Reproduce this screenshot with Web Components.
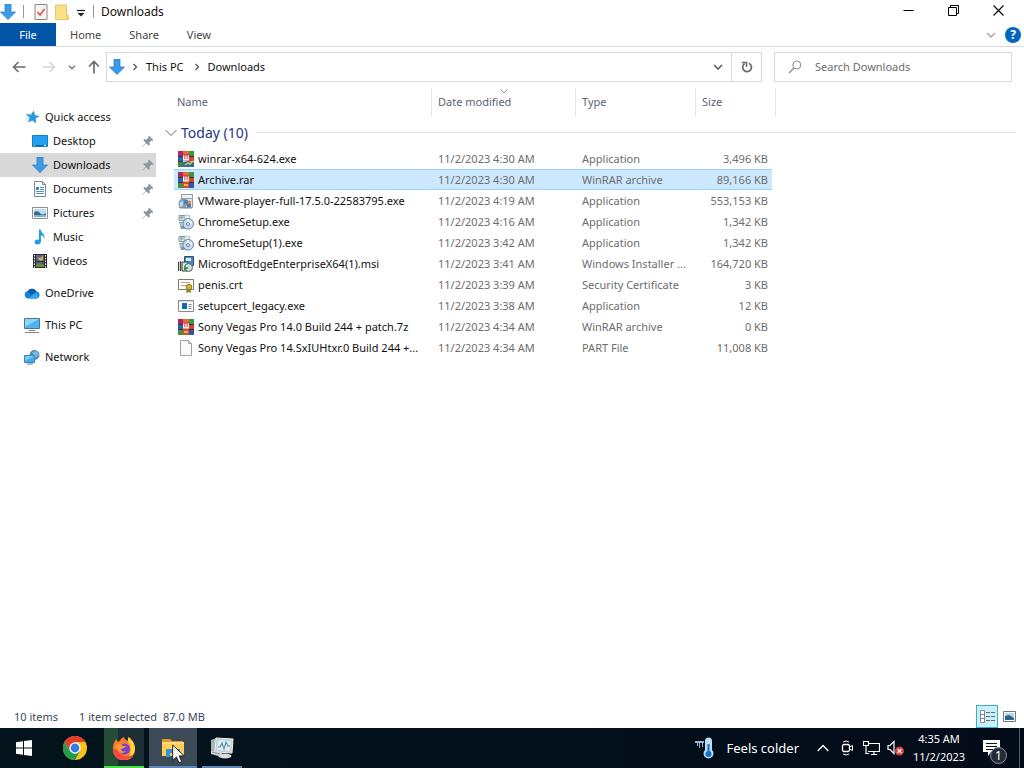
<!DOCTYPE html>
<html lang="en">
<head>
<meta charset="utf-8">
<title>Downloads</title>
<style>
  html, body {
    height: 100%;
    margin: 0;
  }

  body {
    background: #fff;
    color: #111;
    font: 11px/16px "Noto Sans", "Open Sans", sans-serif;
    overflow: hidden;
  }
</style>
</head>
<body>
<file-explorer></file-explorer>

<script>
// Icon artwork, keyed by name: [viewBox width, viewBox height, markup]
const ICONS = {
  download: [16, 16, '<path d="M5 0h6v8h4.500L8 15.600.5 8H5z" fill="#3d9ae6" stroke="#2b80c8" stroke-width=".8"/>'],
  properties: [14, 16, '<path d="M1 .5h12v15H1z" fill="#f7f5f4" stroke="#8b8583"/><path d="M3.500 8l2.500 3 4.500-6" fill="none" stroke="#d8553f" stroke-width="1.600"/>'],
  folder: [14, 16, '<path d="M.5 1h11v13l2-1v2.500H.5z" fill="#fbe08a" stroke="#e5c565"/><path d="M11 10h2.500v5.500H11z" fill="#f2d069"/>'],
  qatMenu: [10, 10, '<path d="M1 3.500h8" stroke="#222" stroke-width="1.300"/><path d="M1.500 6h7L5 9.500z" fill="#222"/>'],
  minimize: [11, 11, '<path d="M.5 5.500h10" stroke="#000"/>'],
  restore: [11, 11, '<path d="M.5 2.500h8v8h-8zM2.500 2.500v-2h8v8h-2" fill="none" stroke="#000"/>'],
  close: [11, 11, '<path d="M.5.5l10 10M10.500.5l-10 10" stroke="#000" stroke-width="1.100"/>'],
  back: [14, 12, '<path d="M13.500 6H1.500M6.500 1L1.500 6l5 5" fill="none" stroke="#6b6b6b" stroke-width="1.600"/>'],
  forward: [14, 12, '<path d="M.5 6h12M7.500 1l5 5-5 5" fill="none" stroke="#d5d5d5" stroke-width="1.500"/>'],
  up: [12, 14, '<path d="M6 13.500v-12M1 6.500l5-5 5 5" fill="none" stroke="#6b6b6b" stroke-width="1.700"/>'],
  recent: [8, 5, '<path d="M1 .7l3 3 3-3" fill="none" stroke="currentColor" stroke-width="1.400"/>'],
  down: [10, 6, '<path d="M1 1l4 4 4-4" fill="none" stroke="currentColor" stroke-width="1.500"/>'],
  sort: [8, 5, '<path d="M.5.5L4 4 7.500.5" fill="none" stroke="#888" stroke-width=".9"/>'],
  expand: [12, 8, '<path d="M.5 1L6 6.500 11.500 1" fill="none" stroke="#666"/>'],
  crumb: [6, 8, '<path d="M1.500 1l3 3-3 3" fill="none" stroke="#555" stroke-width="1.300"/>'],
  refresh: [12, 12, '<path d="M8 2.200a4.400 4.400 0 1 1-4.500.4" fill="none" stroke="#686868" stroke-width="1.700"/><path d="M1 1.500h4.500V6" fill="none" stroke="#686868" stroke-width="1.500"/>'],
  search: [14, 14, '<circle cx="8.800" cy="5" r="4" fill="none" stroke="#8a8a8a"/><path d="M6 8L1 13" stroke="#8a8a8a" stroke-width="1.200"/>'],
  star: [16, 16, '<path d="M9 1.500l1.700 4.300 4.800.1-3.700 3 1.200 5-4.200-2.500-4 2.600.8-4.700L1.500 6l4.900-.2z" transform="rotate(8 8 8)" fill="#2a98e0"/><path d="M2 8h4M1.500 11h4M4 5h4" stroke="#a7d7f5" stroke-width=".8"/>'],
  desktop: [16, 16, '<path d="M.5 2.500h15v11H.5z" fill="#22a0f3" stroke="#1380cc"/><path d="M1 12.500h14" stroke="#0b67ad"/><path d="M2 12.500h1M12 12.500h2" stroke="#fff"/>'],
  document: [16, 16, '<path d="M2.500.5h8l3 3v12h-11z" fill="#fff" stroke="#78889a"/><path d="M10.500.5v3h3" fill="none" stroke="#78889a"/><path d="M4 6.500h3M8 6.500h4M4 8.500h3M8 8.500h4M4 10.500h8M4 12.500h8" stroke="#4a97bb"/><path d="M4 6h3v3H4z" fill="#3a8ab7"/>'],
  picture: [16, 16, '<path d="M.5 2.500h15v11H.5z" fill="#fff" stroke="#899096"/><path d="M2 4h12v8H2z" fill="#bbdcf1"/><path d="M2 7q4-2 6 1t6 0v4H2z" fill="#376b8e"/><path d="M2 10h12v2H2z" fill="#7bb2d0"/>'],
  music: [16, 16, '<path d="M7 .5h1.700c.3 3.500 4.600 4.300 3.800 9-.6-2.200-2-3-3.600-3.300v6.300c0 1.800-1.500 3-3.400 3S2.600 14.600 2.600 13c0-1.800 2.200-3 4.400-2.300z" fill="#1d9ae8"/>'],
  video: [16, 16, '<path d="M1 1h14v14H1z" fill="#2d2d31"/><path d="M4 2h8v6H4z" fill="#52639c"/><path d="M4 9h8v5H4z" fill="#4c5f87"/><path d="M5 4l3 1 3-2v4l-3 1z" fill="#d6ac36"/><path d="M4 12l3-2 5 2v2H4z" fill="#70893a"/><path d="M2.500 2v13M13.500 2v13" stroke="#fff" stroke-dasharray="1.500 1.300"/>'],
  cloud: [16, 16, '<path d="M4 13.500a3.800 3.800 0 0 1-.2-7.500A5 5 0 0 1 12.500 6.500 3.600 3.600 0 0 1 13 13.500z" fill="#1583d6"/><path d="M3.800 6a5 5 0 0 1 8.700.5L6.500 10z" fill="#0a5ba8"/><path d="M4 13.500l8-5.500a3.600 3.600 0 0 1 1 5.500z" fill="#32a9ed"/>'],
  computer: [16, 16, '<path d="M.5 1.500h15v10H.5z" fill="#4eb4ef" stroke="#50758b"/><path d="M1 2h14L1 10z" fill="#8bd4fa"/><path d="M5 13.500h6M1 15.500h14" stroke="#7c8a95"/>'],
  network: [16, 16, '<circle cx="10.500" cy="6" r="5" fill="#4b8fb7"/><path d="M8 3l5-1 2 4-4 3z" fill="#79b8da"/><path d="M.5 6.500h10v7H.5z" fill="#43aeee" stroke="#4382a7"/><path d="M1 7h9L1 12z" fill="#7accfa"/><path d="M3 15h6" stroke="#577a91"/>'],
  pin: [12, 12, '<path d="M7 .5L11.500 5l-1 .8-1-.2-2 2 .2 2.400-1 .8L4 8.200.8 11.600l-.4-.4L3.700 7.800 1.300 5.300l.8-1 2.300.3 2.200-2-.3-1.200z" fill="#8a959c"/>'],
  winrar: [16, 16, '<path d="M0 0h5v5H0z" fill="#a8286c"/><path d="M5 0h6v5H5z" fill="#f0682c"/><path d="M11 0h5v5h-5z" fill="#2f9b43"/><path d="M0 6h5v4H0z" fill="#2465b8"/><path d="M11 6h5v4h-5z" fill="#e0402c"/><path d="M0 11h5v5H0z" fill="#3f9043"/><path d="M11 11h5v5h-5z" fill="#2b58a8"/><path d="M0 5.500h16M0 10.500h16" stroke="#4c2a34"/><path d="M5 3h6v13H5z" fill="#d8492f"/><path d="M5 4h6v6H5z" fill="#c74c3e"/><path d="M5.700 4.500v4.300h4.600V4.500M8 4.500V9" fill="none" stroke="#fff" stroke-width="1.200"/><path d="M6 12h4v2H6z" fill="#e9b84a"/>'],
  winrarSetup: [16, 16, '<path d="M0 0h5v5H0z" fill="#a8286c"/><path d="M5 0h6v5H5z" fill="#f0682c"/><path d="M11 0h5v5h-5z" fill="#2f9b43"/><path d="M0 6h5v4H0z" fill="#2465b8"/><path d="M11 6h5v4h-5z" fill="#e0402c"/><path d="M0 11h6v5H0z" fill="#3f8a43"/><path d="M5 3h6v7H5z" fill="#c74c3e"/><path d="M0 5.500h5M11 5.500h5M0 10.500h5" stroke="#4c2a34"/><path d="M5.700 4.500v4.300h4.600V4.500M8 4.500V9" fill="none" stroke="#fff" stroke-width="1.200"/><path d="M5 11l5-1 6 1v5H4z" fill="#2f6c9d"/><path d="M7 14l3-2 2 1 3-3" fill="none" stroke="#e8c34b" stroke-width="1.500"/>'],
  vmware: [16, 16, '<path d="M3.500 1.500h11v4h-11z" fill="#eef2f4" stroke="#929da4"/><path d="M3.500 5.500h11v9h-11z" fill="#dde5ea" stroke="#929da4"/><path d="M.5 9l3-4 5 1 1 6-3 3H1z" fill="#7d9eb5"/><path d="M2 9l3-1v5l-3 1z" fill="#c2dae8"/><path d="M6 7h4v4H6z" fill="#4b83b5"/><path d="M10 8h3v3h-3z" fill="#d9873b"/><path d="M9 11h4v3H9z" fill="#5277a0"/><path d="M2 15h12" stroke="#7b8891"/>'],
  setup: [16, 16, '<path d="M1 1.500h6v5H1z" fill="#d3e3e7" stroke="#8597a6"/><path d="M2 2.500h4l-3 3z" fill="#74ad86"/><path d="M7 .8l5 1-1 4-5-1z" fill="#e9f0f5" stroke="#91a0ad" stroke-width=".6"/><path d="M1 8h5l1 7H3z" fill="#8098ae"/><path d="M2 9h3v3H3z" fill="#c1d3df"/><circle cx="10.200" cy="9.800" r="5.300" fill="#c9dced" stroke="#5d83ae"/><path d="M10 5v5l4-2" fill="none" stroke="#fff" stroke-width="1.700"/><circle cx="10" cy="10" r="1.500" fill="#fff" stroke="#577ca4"/>'],
  msi: [16, 16, '<path d="M6.500.5h9v9h-9z" fill="#3b8ed0" stroke="#394e61"/><path d="M8 2h5v3H8z" fill="#d5effb"/><path d="M4 6h6v9H4z" fill="#dfe5df" stroke="#38413c"/><path d="M.5 6v9M2.500 5v10" stroke="#38413c" stroke-width="1.200"/><circle cx="10.500" cy="11.500" r="4" fill="#d8dfdf" stroke="#57616a"/><path d="M6 10l5 2-5 3z" fill="#279f4c"/>'],
  certificate: [16, 16, '<path d="M.5 2.500h15v10H.5z" fill="#fffdf4" stroke="#7e7b70"/><path d="M3 5.500h9M3 8.500h5" stroke="#aaa79c"/><path d="M9 11l-1 5 3-1 2 1-.5-5z" fill="#8c8528"/><circle cx="11" cy="10" r="2.800" fill="#d2b330" stroke="#918025"/>'],
  program: [16, 16, '<path d="M.5 2.500h15v11H.5z" fill="#fff" stroke="#858b90"/><path d="M1 3h14v1H1z" fill="#d7dde1"/><path d="M4 5h5v6H4z" fill="#126aac"/><path d="M10.500 6.500h3M10.500 8.500h3M10.500 10.500h3" stroke="#7d8d98"/>'],
  blank: [16, 16, '<path d="M2.500.5h8l3 3v12h-11z" fill="#fafafa" stroke="#a1a1a1"/><path d="M10.500.5v3h3" fill="none" stroke="#a1a1a1"/>'],
  details: [16, 13, '<path d="M1.500.5h4v12h-4zM1.500 4.500h4M1.500 8.500h4" fill="#fff" stroke="#8b8390"/><path d="M7 2.500h4M12 2.500h4M7 6.500h4M12 6.500h4M7 10.500h4M12 10.500h4" stroke="#646b70"/>'],
  thumb: [13, 11, '<path d="M.5.500h12v10H.5z" fill="#fff" stroke="#777"/><path d="M2 2h9v7H2z" fill="#b7d8eb"/><path d="M2 5l4-1 5 3v2H2z" fill="#2c658e"/>'],
  windows: [16, 16, '<path d="M0 2.300l7-1v6.200H0zM8 1.100L16 0v7.500H8zM0 8.500h7v6.200l-7-1zM8 8.500h8V16l-8-1.100z" fill="#fff"/>'],
  chrome: [24, 24, '<circle cx="12" cy="12" r="12" fill="#fbc116"/><path d="M12 6h10.400a12 12 0 0 0-20.800 0L7 15z" fill="#e33b2e"/><path d="M1.600 6a12 12 0 0 0 10.400 18l5-9-5 3-5.500-3.500z" fill="#229d4c"/><circle cx="12" cy="12" r="5.700" fill="#fff"/><circle cx="12" cy="12" r="4.400" fill="#327ce6"/>'],
  firefox: [24, 24, '<path d="M2 7l2-4 2 3c2-1 3-4 6-5 0 2 2 3 4 4l1-4c4 3 6 7 6 12a11 11 0 0 1-22 1c0-3 0-5 1-7z" fill="#ff7926"/><path d="M16 1c4 3 7 7 7 12 0 4-3 8-7 10 3-6 4-12 0-17z" fill="#ffd23d"/><path d="M1 13c0 14 17 13 21 5-5 4-15 3-16-5z" fill="#f54a43"/><circle cx="12.500" cy="13" r="5.500" fill="#7743cf"/><path d="M4 8c3-1 5 0 7 2h3c-1 2-3 2-5 3 0 2 2 3 5 2-3 4-10 2-10-7z" fill="#ff9d30"/>'],
  explorer: [24, 22, '<path d="M1 2h8l2 2h11v15H1z" fill="#dc9c24"/><path d="M1 5h22v14H1z" fill="#ffcf55"/><path d="M5 12h14v8h-4v-4H9v4H5z" fill="#3194d7"/><path d="M1 5h22v2H1z" fill="#ffdc78"/>'],
  monitor: [24, 24, '<path d="M1 4l6-2v14l-6-2z" fill="#aab5b8"/><path d="M6 2l17 1-1 14-17-1z" fill="#c4cdd0" stroke="#eef2f3"/><path d="M8 4l13 1-1 10-13-1z" fill="#dfecee"/><path d="M8 11h2l2-4 2 6 2-7 2 4h2" fill="none" stroke="#5590a8" stroke-width="1.100"/><path d="M1 14l11 3v4L1 18z" fill="#cfd5d5"/><ellipse cx="15" cy="20" rx="6.500" ry="2.500" fill="#d8dddd"/><path d="M2 16l8 2" stroke="#8b9494"/>'],
  cursor: [13, 20, '<path d="M.7 1v15.500l3.700-3.600 2.700 6 2.700-1.200-2.600-5.800h5z" fill="#fff" stroke="#111" stroke-width=".9"/>'],
  weather: [20, 22, '<path d="M0 4h9v2H8v4H7V6H5v5H4V6H3v3H2V6H0z" fill="#8fb9d6"/><path d="M10 4a3.500 3.500 0 0 1 7 0v9a5 5 0 1 1-7 0z" fill="#b9def6"/><path d="M13.500 7v10" stroke="#116ac4" stroke-width="2"/><circle cx="13.500" cy="17" r="3" fill="#126ed0"/>'],
  chevronUp: [12, 8, '<path d="M.7 7L6 1.500 11.300 7" fill="none" stroke="#fff" stroke-width="1.300"/>'],
  camera: [12, 16, '<rect x="1.500" y="4.500" width="7" height="7" rx="1.500" fill="none" stroke="#fff" stroke-width="1.300"/><path d="M8.500 7l3-1.500v5l-3-1.500M2 2q3-2 6 0M2 14q3 2 6 0" fill="none" stroke="#fff"/>'],
  ethernet: [17, 16, '<path d="M5 3.500h11.500v8H5M8 14.500h6M11 12v2.500M.5 1.500h5v4h-5zM3 5.500v8h3" fill="none" stroke="#fff" stroke-width="1.200"/>'],
  muted: [18, 16, '<path d="M1 5.500h2l4-4v12l-4-4H1z" fill="none" stroke="#fff" stroke-width="1.200"/><circle cx="12.500" cy="11" r="4.500" fill="#d83b3b"/><path d="M10.500 9l4 4M14.500 9l-4 4" stroke="#fff" stroke-width="1.300"/>'],
  message: [17, 16, '<path d="M0 0h17v12H8l-3 4v-4H0z" fill="#fff"/><path d="M3 3.500h11M3 6.500h11M3 9.500h7" stroke="#071421"/>']
};

const FILES = [
  ['winrarSetup', 'winrar-x64-624.exe', '11/2/2023 4:30 AM', 'Application', '3,496 KB'],
  ['winrar', 'Archive.rar', '11/2/2023 4:30 AM', 'WinRAR archive', '89,166 KB'],
  ['vmware', 'VMware-player-full-17.5.0-22583795.exe', '11/2/2023 4:19 AM', 'Application', '553,153 KB'],
  ['setup', 'ChromeSetup.exe', '11/2/2023 4:16 AM', 'Application', '1,342 KB'],
  ['setup', 'ChromeSetup(1).exe', '11/2/2023 3:42 AM', 'Application', '1,342 KB'],
  ['msi', 'MicrosoftEdgeEnterpriseX64(1).msi', '11/2/2023 3:41 AM', 'Windows Installer ...', '164,720 KB'],
  ['certificate', 'penis.crt', '11/2/2023 3:39 AM', 'Security Certificate', '3 KB'],
  ['program', 'setupcert_legacy.exe', '11/2/2023 3:38 AM', 'Application', '12 KB'],
  ['winrar', 'Sony Vegas Pro 14.0 Build 244 + patch.7z', '11/2/2023 4:34 AM', 'WinRAR archive', '0 KB'],
  ['blank', 'Sony Vegas Pro 14.SxIUHtxr.0 Build 244 +...', '11/2/2023 4:34 AM', 'PART File', '11,008 KB']
];

// Reset shared by every element that holds controls
const CONTROLS = `
  * { box-sizing: border-box; }
  button, input {
    margin: 0;
    padding: 0;
    border: 0;
    background: none;
    color: inherit;
    font: inherit;
    outline: 0;
  }
  button {
    display: flex;
    align-items: center;
    justify-content: center;
  }
  a { color: inherit; text-decoration: none; }
`;

class BaseElement extends HTMLElement {
  constructor() {
    super();
    this.attachShadow({ mode: 'open' });
  }

  connectedCallback() {
    this.shadowRoot.innerHTML = `<style>${CONTROLS}${this.styles()}</style>${this.markup()}`;
  }
}

class AppIcon extends BaseElement {
  styles() {
    return ':host { display: inline-flex; flex: none; } svg { display: block; }';
  }

  markup() {
    const [width, height, body] = ICONS[this.getAttribute('name')];
    return `<svg width="${width}" height="${height}" viewBox="0 0 ${width} ${height}" aria-hidden="true">${body}</svg>`;
  }
}

class TitleBar extends BaseElement {
  styles() {
    return `
      :host { display: flex; height: 23px; align-items: center; }
      .quick { display: flex; align-items: center; gap: 7px; }
      .line { width: 1px; height: 13px; background: #999; }
      .first { margin-right: 3px; }
      .title { margin-left: 7px; font-size: 12px; }
      .window { display: flex; margin-left: auto; padding-right: 3px; }
      .window button { width: 45px; height: 20px; margin-bottom: 2px; }
    `;
  }

  markup() {
    return `
      <div class="quick">
        <app-icon name="download"></app-icon>
        <span class="line first"></span>
        <button aria-label="Properties"><app-icon name="properties"></app-icon></button>
        <button aria-label="New folder"><app-icon name="folder"></app-icon></button>
        <button aria-label="Customize toolbar"><app-icon name="qatMenu"></app-icon></button>
        <span class="line"></span>
      </div>
      <span class="title"><slot></slot></span>
      <div class="window">
        <button aria-label="Minimize"><app-icon name="minimize"></app-icon></button>
        <button aria-label="Restore"><app-icon name="restore"></app-icon></button>
        <button aria-label="Close"><app-icon name="close"></app-icon></button>
      </div>
    `;
  }
}

class RibbonTabs extends BaseElement {
  styles() {
    return `
      :host { display: flex; height: 24px; border-bottom: 1px solid #dadbdc; color: #444; }
      .tab { height: 23px; padding: 0 14px; }
      .file { width: 56px; background: #0154a6; color: #fff; }
      .tools { display: flex; align-items: center; gap: 9px; margin-left: auto; padding-right: 3px; color: #aaa; }
      .help { width: 16px; height: 16px; border-radius: 50%; background: #0067c0; color: #fff; font-size: 12px; font-weight: 700; }
    `;
  }

  markup() {
    return `
      <button class="tab file">File</button>
      <button class="tab">Home</button>
      <button class="tab">Share</button>
      <button class="tab">View</button>
      <div class="tools">
        <button aria-label="Expand ribbon"><app-icon name="down"></app-icon></button>
        <button class="help" aria-label="Help">?</button>
      </div>
    `;
  }
}

class AddressBar extends BaseElement {
  styles() {
    return `
      :host { display: flex; height: 40px; align-items: center; margin-bottom: 1px; padding: 0 12px; }
      .history { display: flex; align-items: center; gap: 12px; width: 94px; flex: none; color: #777; }
      .history button:nth-child(2) { margin-left: 4px; }
      .box { display: flex; align-items: center; height: 30px; border: 1px solid #d9d9d9; }
      .path { flex: 1; gap: 7px; padding-left: 2px; }
      .path a { margin: 0 3px 0 1px; }
      .drop { margin-left: auto; width: 12px; height: 28px; color: #555; }
      .refresh { width: 30px; height: 28px; border-left: 1px solid #d9d9d9; }
      .search { width: 238px; margin-left: 12px; gap: 13px; padding: 0 13px; }
      input { flex: 1; min-width: 0; }
      input::placeholder { color: #6d6d6d; opacity: 1; }
    `;
  }

  markup() {
    return `
      <div class="history">
        <button aria-label="Back"><app-icon name="back"></app-icon></button>
        <button aria-label="Forward" disabled><app-icon name="forward"></app-icon></button>
        <button aria-label="Recent locations"><app-icon name="recent"></app-icon></button>
        <button aria-label="Up"><app-icon name="up"></app-icon></button>
      </div>
      <div class="box path">
        <app-icon name="download"></app-icon>
        <app-icon name="crumb"></app-icon>
        <a href="#this-pc">This PC</a>
        <app-icon name="crumb"></app-icon>
        <a href="#downloads">Downloads</a>
        <button class="drop" aria-label="Previous locations"><app-icon name="down"></app-icon></button>
        <button class="refresh" aria-label="Refresh"><app-icon name="refresh"></app-icon></button>
      </div>
      <label class="box search">
        <app-icon name="search"></app-icon>
        <input type="text" placeholder="Search Downloads" aria-label="Search Downloads">
      </label>
    `;
  }
}

class NavItem extends BaseElement {
  styles() {
    return `
      :host { display: block; }
      :host([root]) { margin-bottom: 8px; }
      a { display: flex; align-items: center; gap: 5px; height: 24px; padding: 0 2px 0 32px; }
      :host([top]) a, :host([root]) a { padding-left: 24px; }
      :host([selected]) a { background: #d9d9d9; }
      .pin { margin-left: auto; }
    `;
  }

  markup() {
    const pin = this.hasAttribute('pinned') ? '<app-icon class="pin" name="pin"></app-icon>' : '';
    return `<a href="#"><app-icon name="${this.getAttribute('icon')}"></app-icon><slot></slot>${pin}</a>`;
  }
}

class NavPane extends BaseElement {
  styles() {
    return `
      :host { display: block; width: 156px; flex: none; padding-top: 17px; }
      .quick { margin-bottom: 8px; }
    `;
  }

  markup() {
    return `
      <nav aria-label="Folders">
        <div class="quick">
          <nav-item icon="star" top>Quick access</nav-item>
          <nav-item icon="desktop" pinned>Desktop</nav-item>
          <nav-item icon="download" pinned selected>Downloads</nav-item>
          <nav-item icon="document" pinned>Documents</nav-item>
          <nav-item icon="picture" pinned>Pictures</nav-item>
          <nav-item icon="music">Music</nav-item>
          <nav-item icon="video">Videos</nav-item>
        </div>
        <nav-item icon="cloud" root>OneDrive</nav-item>
        <nav-item icon="computer" root>This PC</nav-item>
        <nav-item icon="network" root>Network</nav-item>
      </nav>
    `;
  }
}

class FileList extends BaseElement {
  styles() {
    return `
      :host { display: block; flex: 1; min-width: 0; padding: 0 8px 0 18px; }
      table { width: 100%; table-layout: fixed; border-collapse: separate; border-spacing: 0; }
      th, td { padding: 0 6px; text-align: left; font-weight: 400; white-space: nowrap; }
      thead th { position: relative; height: 28px; border-right: 1px solid #e5e5e5; color: #5a6478; }
      thead th:first-child { padding-left: 3px; }
      thead th:last-child { border: 0; }
      /* sort mark sits over the heading of the sorted column */
      .sort { position: absolute; top: 1px; left: calc(50% - 4px); }
      .group th { height: 32px; padding: 0; }
      .group div { display: flex; align-items: center; gap: 4px; margin-left: -9px; padding-top: 1px; color: #27367f; font-size: 14px; }
      .group div::after { content: ""; flex: 1; height: 1px; margin-left: 4px; background: #e2e2e2; }
      td { height: 21px; color: #6d6d6d; }
      td:first-child { padding: 0 0 0 4px; color: #111; }
      td:nth-child(4) { padding-right: 4px; text-align: right; }
      .name { display: flex; align-items: center; gap: 4px; }
      .selected td:nth-child(-n+4) { background: #cce8ff; box-shadow: inset 0 1px #99d1ff, inset 0 -1px #99d1ff; }
    `;
  }

  markup() {
    const rows = FILES.map(([icon, name, date, type, size], index) => `
      <tr${index === 1 ? ' class="selected" aria-selected="true"' : ''}>
        <td><div class="name"><app-icon name="${icon}"></app-icon><span>${name}</span></div></td>
        <td>${date}</td>
        <td>${type}</td>
        <td>${size}</td>
        <td colspan="2"></td>
      </tr>
    `).join('');

    return `
      <table>
        <colgroup>
          <col style="width: 258px">
          <col style="width: 144px">
          <col style="width: 120px">
          <col style="width: 76px">
          <col style="width: 4px">
          <col>
        </colgroup>
        <thead>
          <tr>
            <th>Name</th>
            <th>Date modified<app-icon class="sort" name="sort"></app-icon></th>
            <th>Type</th>
            <th colspan="2">Size</th>
            <th></th>
          </tr>
        </thead>
        <tbody>
          <tr class="group"><th colspan="6"><div><app-icon name="expand"></app-icon>Today (10)</div></th></tr>
          ${rows}
        </tbody>
      </table>
    `;
  }
}

class StatusBar extends BaseElement {
  styles() {
    return `
      :host { display: flex; align-items: center; height: 23px; padding: 0 8px 0 14px; color: #3b4657; }
      .count { margin-right: 21px; }
      .chosen { margin-right: 6px; }
      .views { display: flex; align-items: center; gap: 5px; margin-left: auto; }
      .active { width: 22px; height: 23px; border: 1px solid #35b0c4; background: #cbeef7; }
    `;
  }

  markup() {
    return `
      <span class="count">10 items</span>
      <span class="chosen">1 item selected</span>
      <span>87.0 MB</span>
      <div class="views">
        <button class="active" aria-label="Details view"><app-icon name="details"></app-icon></button>
        <button aria-label="Thumbnail view"><app-icon name="thumb"></app-icon></button>
      </div>
    `;
  }
}

class TaskButton extends BaseElement {
  styles() {
    return `
      :host { display: block; position: relative; width: 48px; height: 40px; }
      :host([narrow]) { width: 40px; }
      button { width: 100%; height: 100%; border-bottom: 2px solid transparent; padding-top: 2px; }
      :host([running]) button { border-color: #5c87b5; }
      :host([active]) button { background: #3c4b57; }
      :host([progress]) button { border-color: #4be04b; background: linear-gradient(90deg, #244d35 35%, #1c2f37 35%); }
      /* the pointer lies over the button */
      ::slotted(app-icon) { position: absolute; left: 23px; top: 16px; }
    `;
  }

  markup() {
    return `
      <button aria-label="${this.getAttribute('label')}"><app-icon name="${this.getAttribute('icon')}"></app-icon></button>
      <slot></slot>
    `;
  }
}

class TaskBar extends BaseElement {
  styles() {
    return `
      :host { display: flex; height: 40px; background: linear-gradient(90deg, #03141c, #030b18); color: #fff; }
      .apps { display: flex; gap: 5px; }
      .apps task-button:first-child { margin-right: -2px; }
      .tray { display: flex; align-items: center; gap: 7px; margin-left: auto; }
      .weather { gap: 11px; margin-right: 11px; font-size: 13px; }
      .hidden { margin-right: 5px; }
      .camera { margin-right: 3px; }
      .clock { flex-direction: column; width: 54px; margin-right: 10px; line-height: 18px; }
      .notice { position: relative; width: 29px; height: 40px; justify-content: flex-start; }
      .badge {
        position: absolute;
        left: 7px;
        top: 19px;
        width: 17px;
        height: 17px;
        border: 1px solid #8c949b;
        border-radius: 50%;
        background: #252d36;
        font-size: 12px;
        line-height: 15px;
      }
      .show { width: 5px; height: 40px; border-left: 1px solid #56606a; }
    `;
  }

  markup() {
    return `
      <div class="apps">
        <task-button icon="windows" label="Start"></task-button>
        <task-button icon="chrome" label="Google Chrome"></task-button>
        <task-button icon="firefox" label="Firefox" narrow running progress></task-button>
        <task-button icon="explorer" label="File Explorer" running active><app-icon name="cursor"></app-icon></task-button>
        <task-button icon="monitor" label="Process Monitor" narrow running></task-button>
      </div>
      <div class="tray">
        <button class="weather"><app-icon name="weather"></app-icon>Feels colder</button>
        <button class="hidden" aria-label="Show hidden icons"><app-icon name="chevronUp"></app-icon></button>
        <button class="camera" aria-label="Meet now"><app-icon name="camera"></app-icon></button>
        <button aria-label="Network"><app-icon name="ethernet"></app-icon></button>
        <button aria-label="Volume muted"><app-icon name="muted"></app-icon></button>
        <button class="clock"><span>4:35 AM</span><span>11/2/2023</span></button>
        <button class="notice" aria-label="Notifications"><app-icon name="message"></app-icon><span class="badge">1</span></button>
        <button class="show" aria-label="Show desktop"></button>
      </div>
    `;
  }
}

class FileExplorer extends BaseElement {
  styles() {
    return `
      :host { display: flex; flex-direction: column; height: 100%; }
      main { display: flex; flex: 1; min-height: 0; }
    `;
  }

  markup() {
    return `
      <title-bar>Downloads</title-bar>
      <ribbon-tabs></ribbon-tabs>
      <address-bar></address-bar>
      <main>
        <nav-pane></nav-pane>
        <file-list></file-list>
      </main>
      <status-bar></status-bar>
      <task-bar></task-bar>
    `;
  }
}

customElements.define('app-icon', AppIcon);
customElements.define('title-bar', TitleBar);
customElements.define('ribbon-tabs', RibbonTabs);
customElements.define('address-bar', AddressBar);
customElements.define('nav-item', NavItem);
customElements.define('nav-pane', NavPane);
customElements.define('file-list', FileList);
customElements.define('status-bar', StatusBar);
customElements.define('task-button', TaskButton);
customElements.define('task-bar', TaskBar);
customElements.define('file-explorer', FileExplorer);
</script>
</body>
</html>
